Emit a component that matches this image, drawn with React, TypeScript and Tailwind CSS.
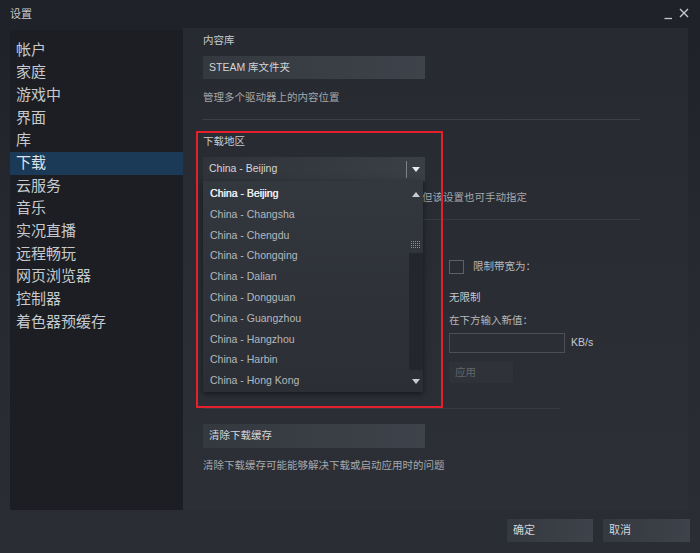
import React from 'react'

const FONT = { fontFamily: '"Liberation Sans", Arial, "Noto Sans CJK SC", sans-serif' }

const navItems = [
  '帐户',
  '家庭',
  '游戏中',
  '界面',
  '库',
  '下载',
  '云服务',
  '音乐',
  '实况直播',
  '远程畅玩',
  '网页浏览器',
  '控制器',
  '着色器预缓存'
]

const regions = [
  'China - Beijing',
  'China - Changsha',
  'China - Chengdu',
  'China - Chongqing',
  'China - Dalian',
  'China - Dongguan',
  'China - Guangzhou',
  'China - Hangzhou',
  'China - Harbin',
  'China - Hong Kong'
]

const TriangleDown = ({ className = '' }: { className?: string }) => (
  <svg width="8" height="5" viewBox="0 0 8 5" className={className}>
    <path d="M0 0 L8 0 L4 5 Z" fill="currentColor" />
  </svg>
)

const TriangleUp = ({ className = '' }: { className?: string }) => (
  <svg width="8" height="5" viewBox="0 0 8 5" className={className}>
    <path d="M0 5 L8 5 L4 0 Z" fill="currentColor" />
  </svg>
)

const Grip = () => (
  <svg width="9" height="7" viewBox="0 0 9 7">
    {[0, 2, 4, 6].map((y) =>
      [0, 2, 4, 6, 8].map((x) => (
        <rect key={`${x}-${y}`} x={x} y={y} width="1" height="1" fill="#8a8e94" />
      ))
    )}
  </svg>
)

const SteamButton = ({ label, className = '' }: { label: string; className?: string }) => (
  <div
    className={`flex items-center pl-[6px] text-[10.5px] text-[#d2d5d9] bg-gradient-to-r from-[#34383f] to-[#3e424a] ${className}`}
  >
    {label}
  </div>
)

const RegionDropdown = () => (
  <div className="absolute left-[20px] top-[153px] w-[220px] h-[211px] flex bg-gradient-to-b from-[#33373e] to-[#2b2e34] shadow-[0_2px_6px_rgba(0,0,0,0.5)]">
    <div className="flex-1 pt-[2px]">
      {regions.map((r, i) => (
        <div
          key={r}
          className={`h-[20.8px] leading-[20.8px] pl-[7px] text-[10.5px] ${
            i === 0 ? 'text-[#eceef0] [text-shadow:0.3px_0_0_#eceef0]' : 'text-[#b4b8bd]'
          }`}
        >
          {r}
        </div>
      ))}
    </div>
    <div className="w-[15px] flex flex-col items-center">
      <div className="h-[16px] flex items-end justify-center text-[#c8cbcf]">
        <TriangleUp />
      </div>
      <div className="h-[56px] flex flex-col items-center justify-end pb-[5px]">
        <Grip />
      </div>
      <div className="w-[14px] h-[117px] bg-[#23262b]" />
      <div className="flex-1 flex items-center justify-center text-[#c8cbcf]">
        <TriangleDown />
      </div>
    </div>
  </div>
)

export default function App() {
  return (
    <div
      style={FONT}
      className="w-[700px] h-[553px] flex flex-col bg-gradient-to-b from-[#1e2127] via-[#272a31] to-[#2a2d33] overflow-hidden"
    >
      {/* title bar */}
      <div className="h-[28px] flex items-center justify-between pl-[10px] pr-[11px]">
        <span className="text-[11px] text-[#c4c8cc]">设置</span>
        <div className="flex items-center gap-[6px] text-[#c4c8cc]">
          <svg width="9" height="12" viewBox="0 0 9 12">
            <path d="M0.5 10.5 H8" stroke="currentColor" strokeWidth="1.3" />
          </svg>
          <svg width="10" height="10" viewBox="0 0 10 10" className="mb-[3px]">
            <path d="M1 1 L9 9 M9 1 L1 9" stroke="currentColor" strokeWidth="1.4" />
          </svg>
        </div>
      </div>

      {/* body */}
      <div className="h-[482px] flex">
        <div className="w-[173px] ml-[10px] mt-[2px] bg-[#1c1e23] pt-[8.6px]">
          {navItems.map((item) => (
            <div
              key={item}
              className={`h-[22.7px] leading-[22.7px] pl-[6px] text-[15px] ${
                item === '下载' ? 'bg-[#1b3a58] text-[#dfe3e7]' : 'text-[#c6cace]'
              }`}
            >
              {item}
            </div>
          ))}
        </div>

        <div className="relative flex-1 mr-[12px] bg-gradient-to-b from-[#272a31] to-[#2c2f36] pl-[20px] text-[10.5px]">
          <div className="mt-[5px] h-[14px] leading-[14px] text-[#c6cace]">内容库</div>
          <SteamButton label="STEAM 库文件夹" className="mt-[9px] w-[222px] h-[23px]" />
          <div className="mt-[11px] h-[14px] leading-[14px] text-[#a4a8ad]">管理多个驱动器上的内容位置</div>
          <div className="mt-[15px] w-[437px] h-px bg-[#3b3f46]" />

          <div className="mt-[14px] h-[14px] leading-[14px] text-[#c6cace]">下载地区</div>
          <div className="mt-[9px] w-[222px] h-[24px] flex items-center bg-gradient-to-r from-[#30343a] to-[#3a3e45]">
            <span className="flex-1 pl-[6px] text-[#d4d7db]">China - Beijing</span>
            <div className="w-px h-[17px] bg-[#7d8187]" />
            <div className="w-[18px] flex justify-center text-[#e8eaec]">
              <TriangleDown />
            </div>
          </div>
          <div className="mt-[9px] h-[14px] leading-[14px] flex text-[#a4a8ad] whitespace-nowrap">
            <span className="w-[219px]" />
            <span>但该设置也可手动指定</span>
          </div>
          <div className="mt-[15px] w-[437px] h-px bg-[#363a41]" />

          <div className="mt-[40px] flex">
            <div className="w-[246px]" />
            <div className="flex flex-col">
              <div className="h-[14px] flex items-center gap-[9px]">
                <div className="w-[15px] h-[14px] border border-[#5c6067]" />
                <span className="text-[#b4b8bd]">限制带宽为：</span>
              </div>
              <div className="mt-[16px] h-[14px] leading-[14px] text-[#c6cace]">无限制</div>
              <div className="mt-[9px] h-[14px] leading-[14px] text-[#b4b8bd]">在下方输入新值：</div>
              <div className="mt-[6px] flex items-center gap-[6px]">
                <div className="w-[116px] h-[20px] border border-[#4a4e55] bg-[#2b2e35]" />
                <span className="text-[#c6cace]">KB/s</span>
              </div>
              <div className="mt-[9px] w-[64px] h-[21px] flex items-center pl-[6px] bg-[#2f3238] text-[#62666c]">
                应用
              </div>
            </div>
          </div>

          <div className="mt-[25px] w-[357px] h-px bg-[#363a41]" />
          <SteamButton label="清除下载缓存" className="mt-[15px] w-[222px] h-[24px]" />
          <div className="mt-[10px] h-[14px] leading-[14px] text-[#a4a8ad]">
            清除下载缓存可能能够解决下载或启动应用时的问题
          </div>

          <RegionDropdown />
          <div className="absolute left-[13px] top-[103px] w-[247px] h-[277px] border-2 border-[#e3202b] pointer-events-none" />
        </div>
      </div>

      {/* footer */}
      <div className="flex-1 flex justify-end items-start pt-[9px] pr-[10px] gap-[10px]">
        <SteamButton label="确定" className="w-[86px] h-[23px] text-[11px]" />
        <SteamButton label="取消" className="w-[87px] h-[23px] text-[11px]" />
      </div>
    </div>
  )
}
